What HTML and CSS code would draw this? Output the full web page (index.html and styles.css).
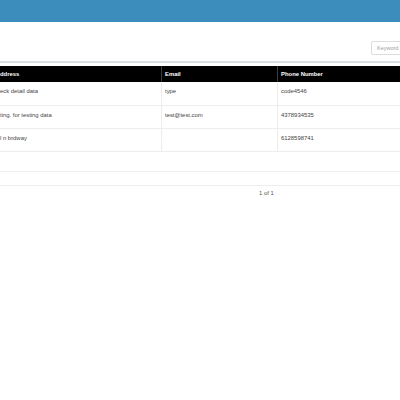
FILE: index.html
```html
<!DOCTYPE html>
<html lang="en">
<head>
<meta charset="utf-8">
<title>Addresses</title>
<link rel="stylesheet" href="styles.css">
</head>
<body>
  <header class="topbar"></header>

  <div class="toolbar">
    <input class="search" type="text" placeholder="Keyword">
  </div>
  <div class="rule"></div>

  <div class="grid-wrap">
    <table class="grid">
      <colgroup>
        <col class="c-address">
        <col class="c-email">
        <col class="c-phone">
      </colgroup>
      <thead>
        <tr>
          <th class="first">ddress</th>
          <th>Email</th>
          <th>Phone Number</th>
        </tr>
      </thead>
      <tbody>
        <tr>
          <td class="first">eck detail data</td>
          <td>type</td>
          <td>code4546</td>
        </tr>
        <tr>
          <td class="first">ting. for testing data</td>
          <td>test@test.com</td>
          <td>4378934535</td>
        </tr>
        <tr>
          <td class="first">l n brdway</td>
          <td></td>
          <td>6128598741</td>
        </tr>
      </tbody>
    </table>
  </div>

  <div class="blank-row tall"></div>
  <div class="blank-row short"></div>

  <div class="pager">1 of 1</div>
</body>
</html>
```

FILE: styles.css
```css
html, body {
  margin: 0;
  padding: 0;
  background: #ffffff;
  overflow: hidden;
}

body {
  font-family: "Liberation Sans", Arial, sans-serif;
  font-size: 5.9px;
  color: #444444;
  width: 400px;
}

.topbar {
  height: 22px;
  background: #3c8dbc;
}

.toolbar {
  height: 39px;
  box-sizing: border-box;
  padding-top: 19px;
  display: flex;
  justify-content: flex-end;
  overflow: hidden;
}

.search {
  box-sizing: border-box;
  width: 42px;
  height: 14px;
  margin: 0 -13px 0 0;
  padding: 0 5px;
  border: 1px solid #dddddd;
  border-radius: 1px;
  font-family: "Liberation Sans", Arial, sans-serif;
  font-size: 5.5px;
  color: #555555;
  background: #ffffff;
  outline: none;
}

.search::placeholder {
  color: #a0a0a0;
}

.rule {
  height: 2px;
  background: #d8dee6;
  margin-bottom: 3px;
}

.grid-wrap {
  overflow: hidden;
  width: 400px;
}

.grid {
  border-collapse: collapse;
  table-layout: fixed;
  width: 440px;
}

.c-address { width: 161px; }
.c-email { width: 116px; }
.c-phone { width: 163px; }

.grid th {
  height: 16px;
  padding: 0 3.5px;
  background: #000000;
  color: #ffffff;
  font-weight: bold;
  text-align: left;
  vertical-align: middle;
  border-left: 1px solid #3a3a3a;
  box-sizing: border-box;
}

.grid td {
  height: 23px;
  box-sizing: border-box;
  padding: 6px 3.5px 0;
  vertical-align: top;
  line-height: 7px;
  border-top: 1px solid #ededed;
  border-left: 1px solid #ededed;
  white-space: nowrap;
}

.grid tbody tr:first-child td {
  border-top: none;
}

.grid .first {
  padding-left: 0;
  border-left: none;
}

.blank-row {
  border-top: 1px solid #ededed;
}

.blank-row.tall { height: 19px; }
.blank-row.short { height: 13px; border-bottom: 1px solid #ededed; }

.pager {
  padding: 4px 0 0 259px;
  line-height: 7px;
  color: #555555;
}
```
